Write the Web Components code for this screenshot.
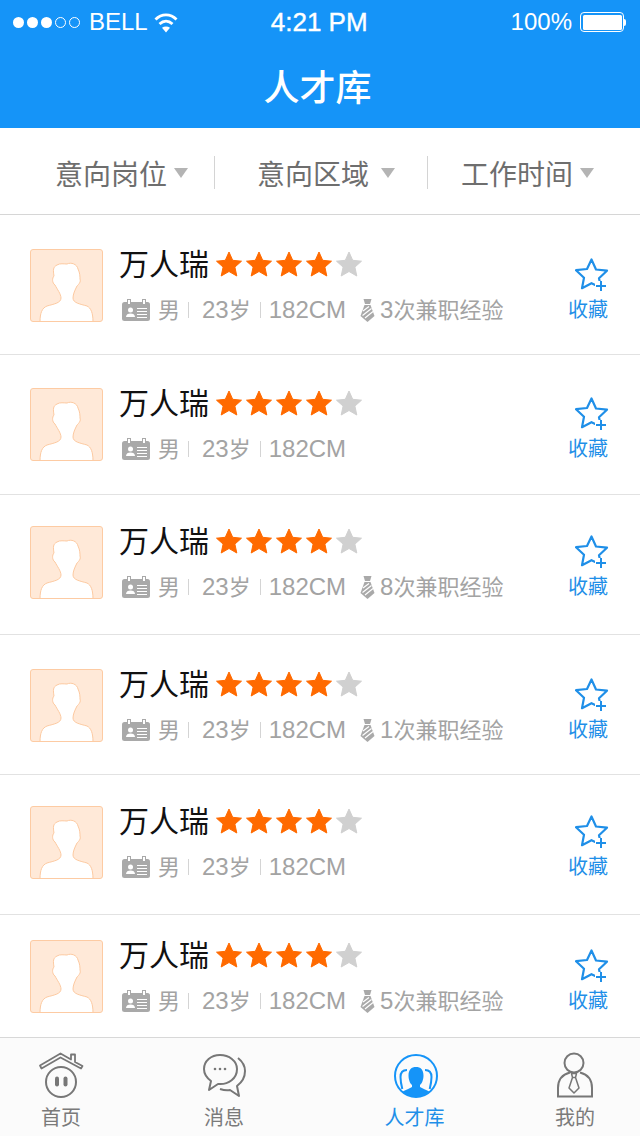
<!DOCTYPE html>
<html lang="zh-CN">
<head>
<meta charset="utf-8">
<title>人才库</title>
<style>
html, body { margin: 0; padding: 0; }
body {
  width: 640px;
  height: 1136px;
  overflow: hidden;
  background: #fff;
  font-family: "Liberation Sans", "Noto Sans CJK SC", sans-serif;
}
</style>
</head>
<body>
<app-shell>
  <status-bar slot="top"></status-bar>
  <nav-title slot="top">人才库</nav-title>
  <filter-bar slot="top">
    <filter-item style="--pad:55px;--tri:7px;">意向岗位</filter-item>
    <filter-item style="--pad:42px;--tri:12px;">意向区域</filter-item>
    <filter-item style="--pad:33px;--tri:7px;" last>工作时间</filter-item>
  </filter-bar>
  <talent-row style="--top:34px;" name="万人瑞" exp="3"></talent-row>
  <talent-row style="--top:33px;" name="万人瑞"></talent-row>
  <talent-row style="--top:31px;" name="万人瑞" exp="8"></talent-row>
  <talent-row style="--top:34px;" name="万人瑞" exp="1"></talent-row>
  <talent-row style="--top:31px;" name="万人瑞"></talent-row>
  <talent-row style="--top:25px;" name="万人瑞" exp="5"></talent-row>
  <tab-bar slot="bottom">
    <tab-item icon="home" style="margin-left:41px;width:40px;">首页</tab-item>
    <tab-item icon="chat" style="margin-left:123px;width:40px;">消息</tab-item>
    <tab-item icon="talent" active style="margin-left:140px;width:61px;">人才库</tab-item>
    <tab-item icon="mine" style="margin-left:110px;width:40px;">我的</tab-item>
  </tab-bar>
</app-shell>

<script>
const icons = {
  home: `<svg width="48" height="46" viewBox="0 0 48 46" fill="none" stroke="#777" stroke-width="2">
    <path stroke-linejoin="round" stroke-width="1.8" d="M3 13.5L23.5 1.5 34 7.5V2.5h4V10l7.500 4-1.500 2.500L23.500 5.500 4.500 16.500z"/>
    <circle cx="24" cy="30" r="15"/>
    <rect x="18" y="24.500" width="4" height="10" rx="2" fill="#777" stroke="none"/>
    <rect x="26.500" y="24.500" width="4" height="10" rx="2" fill="#777" stroke="none"/>
  </svg>`,
  chat: `<svg width="43" height="44" viewBox="0 0 43 44" fill="none" stroke="#777" stroke-width="2">
    <path stroke-linejoin="round" d="M8 27L6 36l9-6C26 31 34 24 34 15 34 7 26 1 17 1 8 1 1 7 1 15c0 5 3 9 7 12z"/>
    <path stroke-linejoin="round" d="M35 4c5 4 7 8 7 13 0 7-4 12-8 15l2 10-9-6c-4 1-7 0-10-1"/>
    <circle cx="12" cy="15" r="1.300" fill="#777" stroke="none"/>
    <circle cx="17" cy="15" r="1.300" fill="#777" stroke="none"/>
    <circle cx="22" cy="15" r="1.300" fill="#777" stroke="none"/>
  </svg>`,
  talent: `<svg style="margin-left:2px" width="44" height="44" viewBox="0 0 44 44" fill="none" stroke="#1594f8" stroke-width="2">
    <circle cx="22" cy="22" r="21"/>
    <path fill="#1594f8" stroke="none" d="M14.500 21.500c0-6 3-8.500 7.500-8.500s7.500 2.500 7.500 8.500c0 4-1.500 8-3.500 9.500V33c2 1.500 6.500 2.500 10 5C32 41.500 27 43 22 43s-10-1.500-14-5c3.500-2.500 8-3.500 10-5v-2c-2-1.500-3.500-5.500-3.500-9.500z"/>
    <path stroke-width="2" d="M13 16c-4 0-6.500 2.500-6.500 7 0 4 .8 8 1.800 12M31 16c4 0 6.500 2.500 6.500 7 0 4-.8 8-1.800 12"/>
  </svg>`,
  mine: `<svg width="38" height="46" viewBox="0 0 38 46" fill="none" stroke="#777" stroke-width="2">
    <circle cx="18" cy="11" r="9.500"/>
    <path d="M14 20.500C6 22.500 2 28 2 36v8.500h34V36c0-8-4-13.500-12-15.500"/>
    <path stroke-width="1.500" stroke-linejoin="round" d="M15.500 21.500h5l-1 4h-3zM16.500 25.500h3l3.500 10.500-5 5-5-5z"/>
  </svg>`
};

customElements.define('app-shell', class extends HTMLElement {
  constructor() {
    super();
    this.attachShadow({ mode: 'open' });
    this.shadowRoot.innerHTML = `
<style>
:host { display: flex; flex-direction: column; height: 1136px; }
main { flex: 1; min-height: 0; overflow: hidden; }
</style>
<slot name="top"></slot>
<main><slot></slot></main>
<slot name="bottom"></slot>`;
  }
});

customElements.define('status-bar', class extends HTMLElement {
  constructor() {
    super();
    this.attachShadow({ mode: 'open' });
    this.shadowRoot.innerHTML = `
<style>
:host { display: flex; align-items: center; height: 44px; background: #1594f8; color: #fff; font-size: 24px; padding: 0 14px 0 13px; box-sizing: border-box; }
.dots { display: flex; gap: 3px; margin-right: 9px; }
.dots i { width: 11px; height: 11px; border-radius: 50%; background: #fff; box-sizing: border-box; }
.dots i.off { background: none; border: 1px solid #fff; }
svg { margin-left: 6px; }
.time { flex: 1; text-align: center; font-size: 26px; margin-left: -50px; -webkit-text-stroke: .4px #fff; }
.batt { display: flex; align-items: center; margin-left: 8px; }
.batt b { display: block; width: 44px; height: 20px; border: 1.5px solid #fff; border-radius: 4px; box-sizing: border-box; padding: 1.500px; }
.batt b::before { content: ""; display: block; height: 100%; background: #fff; border-radius: 1.500px; }
.batt u { display: block; width: 2px; height: 7px; background: #fff; border-radius: 0 2px 2px 0; }
</style>
<div class="dots"><i></i><i></i><i></i><i class="off"></i><i class="off"></i></div>
<span>BELL</span>
<svg width="24" height="21" viewBox="0 0 24 21" fill="none" stroke="#fff" stroke-width="2.800">
  <path d="M1.500 7.500C7.500 1.300 16.500 1.300 22.500 7.500"/>
  <path d="M5.500 12C9.500 8.200 14.500 8.200 18.500 12"/>
  <path d="M12 20.500l-4-4.800c2.300-1.500 5.700-1.500 8 0z" fill="#fff" stroke="none"/>
</svg>
<span class="time">4:21 PM</span>
<span>100%</span>
<span class="batt"><b></b><u></u></span>`;
  }
});

customElements.define('nav-title', class extends HTMLElement {
  constructor() {
    super();
    this.attachShadow({ mode: 'open' });
    this.shadowRoot.innerHTML = `
<style>
:host { display: block; height: 84px; box-sizing: border-box; padding-right: 5px; line-height: 89px; background: #1594f8; color: #fff; font-size: 36px; font-weight: 500; text-align: center; }
</style>
<slot></slot>`;
  }
});

customElements.define('filter-bar', class extends HTMLElement {
  constructor() {
    super();
    this.attachShadow({ mode: 'open' });
    this.shadowRoot.innerHTML = `
<style>
:host { display: flex; height: 87px; box-sizing: border-box; padding-top: 28px; border-bottom: 1px solid #d6d6d6; background: #fff; }
</style>
<slot></slot>`;
  }
});

customElements.define('filter-item', class extends HTMLElement {
  constructor() {
    super();
    this.attachShadow({ mode: 'open' });
    this.shadowRoot.innerHTML = `
<style>
:host { display: flex; align-items: center; flex: none; width: 215px; height: 33px; padding-left: var(--pad); box-sizing: border-box; color: #6e6e6e; font-size: 28px; border-right: 1px solid #d4d4d4; }
:host(:nth-child(2)) { width: 213px; }
:host([last]) { border-right: 0; }
i { width: 0; height: 0; margin-left: var(--tri); border: 7.500px solid transparent; border-top: 10px solid #b4b4b4; border-bottom: 0; }
</style>
<slot></slot><i></i>`;
  }
});

customElements.define('star-rating', class extends HTMLElement {
  connectedCallback() {
    if (this.shadowRoot) return;
    this.attachShadow({ mode: 'open' });
    const value = Number(this.getAttribute('value') || 0);
    let stars = '';
    for (let i = 0; i < 5; i++) {
      const c = i < value ? '#ff6a00' : '#d0d0d0';
      stars += `<svg width="28" height="27" viewBox="0 0 28 27"><path fill="${c}" stroke="${c}" stroke-width="1" stroke-linejoin="round" d="M14 1l3.700 8.300 8.800.900-6.600 5.900 1.900 8.900L14 20.500 6.200 25l1.900-8.900L1.500 10.200l8.800-.900z"/></svg>`;
    }
    this.shadowRoot.innerHTML = `
<style>
:host { display: flex; gap: 2px; }
</style>
${stars}`;
  }
});

customElements.define('talent-row', class extends HTMLElement {
  connectedCallback() {
    if (this.shadowRoot) return;
    this.attachShadow({ mode: 'open' });
    const name = this.getAttribute('name');
    const exp = this.getAttribute('exp');
    const expHtml = exp ? `
      <svg class="tie" width="15" height="23" viewBox="0 0 15 23">
        <path fill="#a9a9a9" d="M3.500 0h8l-1.500 5H5z"/>
        <path fill="#a9a9a9" d="M4.500 6h6l4 11-7 6-7-6z"/>
        <path stroke="#fff" stroke-width="1.200" d="M3 12l6-4.500M2.500 16.500l9-7M5 19l8-6.500"/>
      </svg>
      <span class="mix"><b>${exp}</b><em>次兼职经验</em></span>` : '';
    this.shadowRoot.innerHTML = `
<style>
:host { display: flex; height: 140px; box-sizing: border-box; padding: var(--top) 32px 0 30px; border-bottom: 1px solid #e2e2e2; background: #fff; }
.avatar { flex: none; width: 73px; height: 73px; box-sizing: border-box; background: #ffe9d8; border: 1px solid #fdcba3; border-radius: 3px; overflow: hidden; }
.avatar svg { display: block; margin: -1px; }
.info { flex: 1; min-width: 0; margin-left: 16px; }
.head { display: flex; align-items: center; height: 30px; }
.name { font-size: 30px; color: #111; margin: 2px 6px 0 0; line-height: 30px; }
.meta { display: flex; align-items: center; height: 30px; margin-top: 16px; color: #a3a3a3; font-size: 22px; }
.card { margin: 0 8px 0 3px; }
.sep { width: 1px; height: 16px; background: #d4d4d4; }
.mix { display: flex; align-items: center; }
.age { margin: 0 9px 0 13px; }
.h { margin-left: 8px; }
b { font-weight: normal; font-size: 24px; }
em { font-style: normal; margin-top: -4px; }
.gender { margin-top: -4px; }
.tie { margin: 0 5px 0 14px; }
.collect { flex: none; width: 40px; display: flex; flex-direction: column; align-items: center; color: #1f8fe8; font-size: 20px; }
.collect svg { margin: 9px 0 0 7px; }
.collect span { line-height: 20px; margin-top: 9px; }
</style>
<div class="avatar">
  <svg width="73" height="73" viewBox="0 0 73 73">
    <path fill="#fff" stroke="#fcc9a0" stroke-width="1" d="M10 73C10 64 12 59 17 57 24 55 31 54 31 49 31 45 27 40 25 36 22 34 22 29 24 27 23 21 23 18 27 16 30 14 34 15 37 15 41 13 47 15 48 20 50 24 50 28 50 30 51 33 49 35 47 37 45 41 43 45 43 49 43 54 50 55 57 57 61 59 63 64 63 73Z"/>
  </svg>
</div>
<div class="info">
  <div class="head"><span class="name">${name}</span><star-rating value="4"></star-rating></div>
  <div class="meta">
    <svg class="card" width="28" height="22" viewBox="0 0 28 22">
      <rect y="3" width="28" height="19" rx="2.500" fill="#a9a9a9"/>
      <rect x="5.500" y=".5" width="3" height="5" fill="#fff" stroke="#a9a9a9" stroke-width="1"/>
      <rect x="20.500" y=".5" width="3" height="5" fill="#fff" stroke="#a9a9a9" stroke-width="1"/>
      <circle cx="8.500" cy="11" r="2.500" fill="#fff"/>
      <path fill="#fff" d="M4 18c0-2.500 2-3.500 4.500-3.500S13 15.500 13 18z"/>
      <path stroke="#fff" stroke-width="1" d="M15 9.500h10M15 12.500h10M15 15.500h10M15 18.500h10"/>
    </svg>
    <span class="gender">男</span>
    <i class="sep" style="margin-left:8px"></i>
    <span class="mix age"><b>23</b><em>岁</em></span>
    <i class="sep"></i>
    <span class="h"><b>182CM</b></span>
    ${expHtml}
  </div>
</div>
<div class="collect">
  <svg width="34" height="33" viewBox="0 0 34 33" fill="none">
    <path stroke="#1f8fe8" stroke-width="2.200" stroke-linejoin="round" d="M16.500 1.500l4.500 10 11 1.200-8 7.500 2 9.500-9.500-4.500-9.500 5 2-10.500-8-7.500 11-1.200z"/>
    <rect x="20" y="23" width="14" height="10" fill="#fff"/>
    <path stroke="#1f8fe8" stroke-width="2" d="M21 28h10M26 23v10"/>
  </svg>
  <span>收藏</span>
</div>`;
  }
});

customElements.define('tab-bar', class extends HTMLElement {
  constructor() {
    super();
    this.attachShadow({ mode: 'open' });
    this.shadowRoot.innerHTML = `
<style>
:host { display: flex; flex: none; height: 99px; box-sizing: border-box; border-top: 1px solid #d8d8d8; background: #fbfbfb; }
</style>
<slot></slot>`;
  }
});

customElements.define('tab-item', class extends HTMLElement {
  connectedCallback() {
    if (this.shadowRoot) return;
    this.attachShadow({ mode: 'open' });
    this.shadowRoot.innerHTML = `
<style>
:host { display: flex; flex-direction: column; align-items: center; flex: none; color: #7a7a7a; font-size: 20px; }
:host([active]) { color: #1f8fe8; }
.ic { display: flex; align-items: flex-end; justify-content: center; height: 60px; }
.ic svg { display: block; flex: none; }
.t { line-height: 20px; margin-top: 10px; white-space: nowrap; }
</style>
<div class="ic">${icons[this.getAttribute('icon')]}</div>
<div class="t"><slot></slot></div>`;
  }
});
</script>
</body>
</html>
